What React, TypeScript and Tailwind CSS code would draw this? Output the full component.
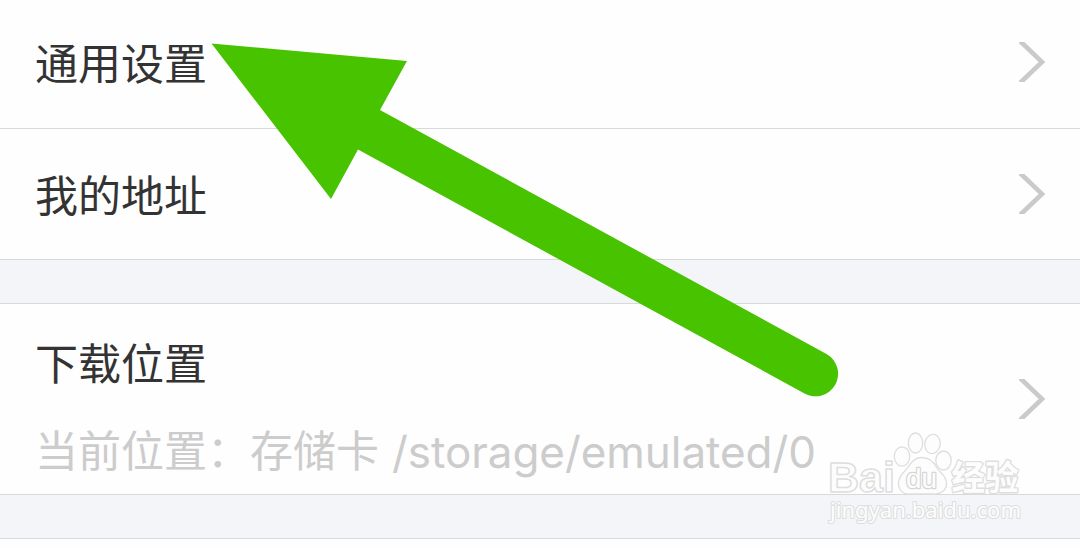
interface RowProps {
  label: string;
  className: string;
}

function Chevron() {
  return (
    <svg className="h-10 w-[27px] shrink-0" viewBox="0 0 27 40" fill="none" stroke="#c9cacc" strokeWidth={4.6}>
      <path d="M0 -2 L23 20 L0 42" />
    </svg>
  );
}

function SettingRow({ label, className }: RowProps) {
  return (
    <div className={`flex justify-between border-b border-[#d9d9db] pl-[35px] pr-[34px] ${className}`}>
      <span className="-mt-[2px] text-[43px] leading-[60px] text-[#333333]">{label}</span>
      <Chevron />
    </div>
  );
}

function Arrow() {
  return (
    <svg className="pointer-events-none absolute inset-0 h-[548px] w-[1080px]" viewBox="0 0 1080 548">
      <path
        fill="#48c300"
        d="M211.500 43.500 L407 61 L380 110 L826.500 354 A22.300 22.300 0 0 1 804.500 393.500 L358 149.500 L331 199 Z"
      />
    </svg>
  );
}

function Watermark() {
  return (
    <svg
      className="pointer-events-none absolute left-[820px] top-[425px] h-[105px] w-[210px]"
      viewBox="820 425 210 105"
      fill="#fdfdfd"
      stroke="#dedede"
      strokeWidth={1.3}
      strokeLinejoin="round"
    >
      <text
        x="828"
        y="491.500"
        fontSize="43"
        fontFamily="'Liberation Sans'"
        fontWeight={700}
        textLength="67"
        lengthAdjust="spacingAndGlyphs"
        strokeWidth={1.5}
      >
        Bai
      </text>
      <ellipse cx="902" cy="456.500" rx="7.700" ry="9.700" />
      <ellipse cx="915.500" cy="443" rx="7.200" ry="10" />
      <ellipse cx="932.500" cy="444" rx="7.700" ry="9.700" transform="rotate(10 932.5 444)" />
      <ellipse cx="943.500" cy="460.500" rx="7.700" ry="9.500" />
      <path d="M922 457.500 C931 457.500 935 464 937 468 C940 473 946 475 946.500 483 C947 490 941 494.500 933 494 L910 494 C902 494.500 898 489 898.500 482 C899 475 905 472 908 467 C911 462 915 457.500 922 457.500 Z" />
      <text
        x="906"
        y="487.500"
        fontSize="28"
        fontFamily="'Liberation Sans'"
        textLength="31"
        lengthAdjust="spacingAndGlyphs"
        stroke="#d6d6d6"
        strokeWidth={2.6}
        paintOrder="stroke"
      >
        du
      </text>
      <text
        x="951.500"
        y="490"
        fontSize="34"
        fontFamily="'Noto Sans CJK SC', sans-serif"
        fontWeight={700}
        textLength="67"
        lengthAdjust="spacingAndGlyphs"
        paintOrder="stroke"
        strokeWidth={2.8}
      >
        经验
      </text>
      <text
        x="830"
        y="518"
        fontSize="22.500"
        fontFamily="'Noto Sans', sans-serif"
        textLength="191"
        lengthAdjust="spacingAndGlyphs"
        paintOrder="stroke"
        strokeWidth={2.2}
      >
        jingyan.baidu.com
      </text>
    </svg>
  );
}

export default function App() {
  return (
    <div className="relative h-[548px] w-[1080px] overflow-hidden bg-[#fefefe] font-['Noto_Sans_CJK_SC',sans-serif]">
      <SettingRow label="通用设置" className="h-[129px] items-center pb-1" />
      <SettingRow label="我的地址" className="h-[131px] items-center" />
      <div className="h-11 border-b border-[#d9d9db] bg-[#f4f5f9]" />

      <div className="flex h-[191px] items-center justify-between border-b border-[#d9d9db] pl-[35px] pr-[34px]">
        <div className="flex flex-col gap-[27px] pt-[13px]">
          <span className="text-[43px] leading-[60px] text-[#333333]">下载位置</span>
          <span className="flex h-[62px] whitespace-nowrap text-[43px] leading-[60px] text-[#cccccc]">
            当前位置：存储卡
            <span className="ml-[13px] pt-[4px] font-[Inter,sans-serif] text-[44px] tracking-[-0.05px]">
              /storage/emulated/0
            </span>
          </span>
        </div>
        <Chevron />
      </div>
      <div className="h-11 border-b border-[#d9d9db] bg-[#f4f5f9]" />

      <Arrow />
      <Watermark />
    </div>
  );
}
